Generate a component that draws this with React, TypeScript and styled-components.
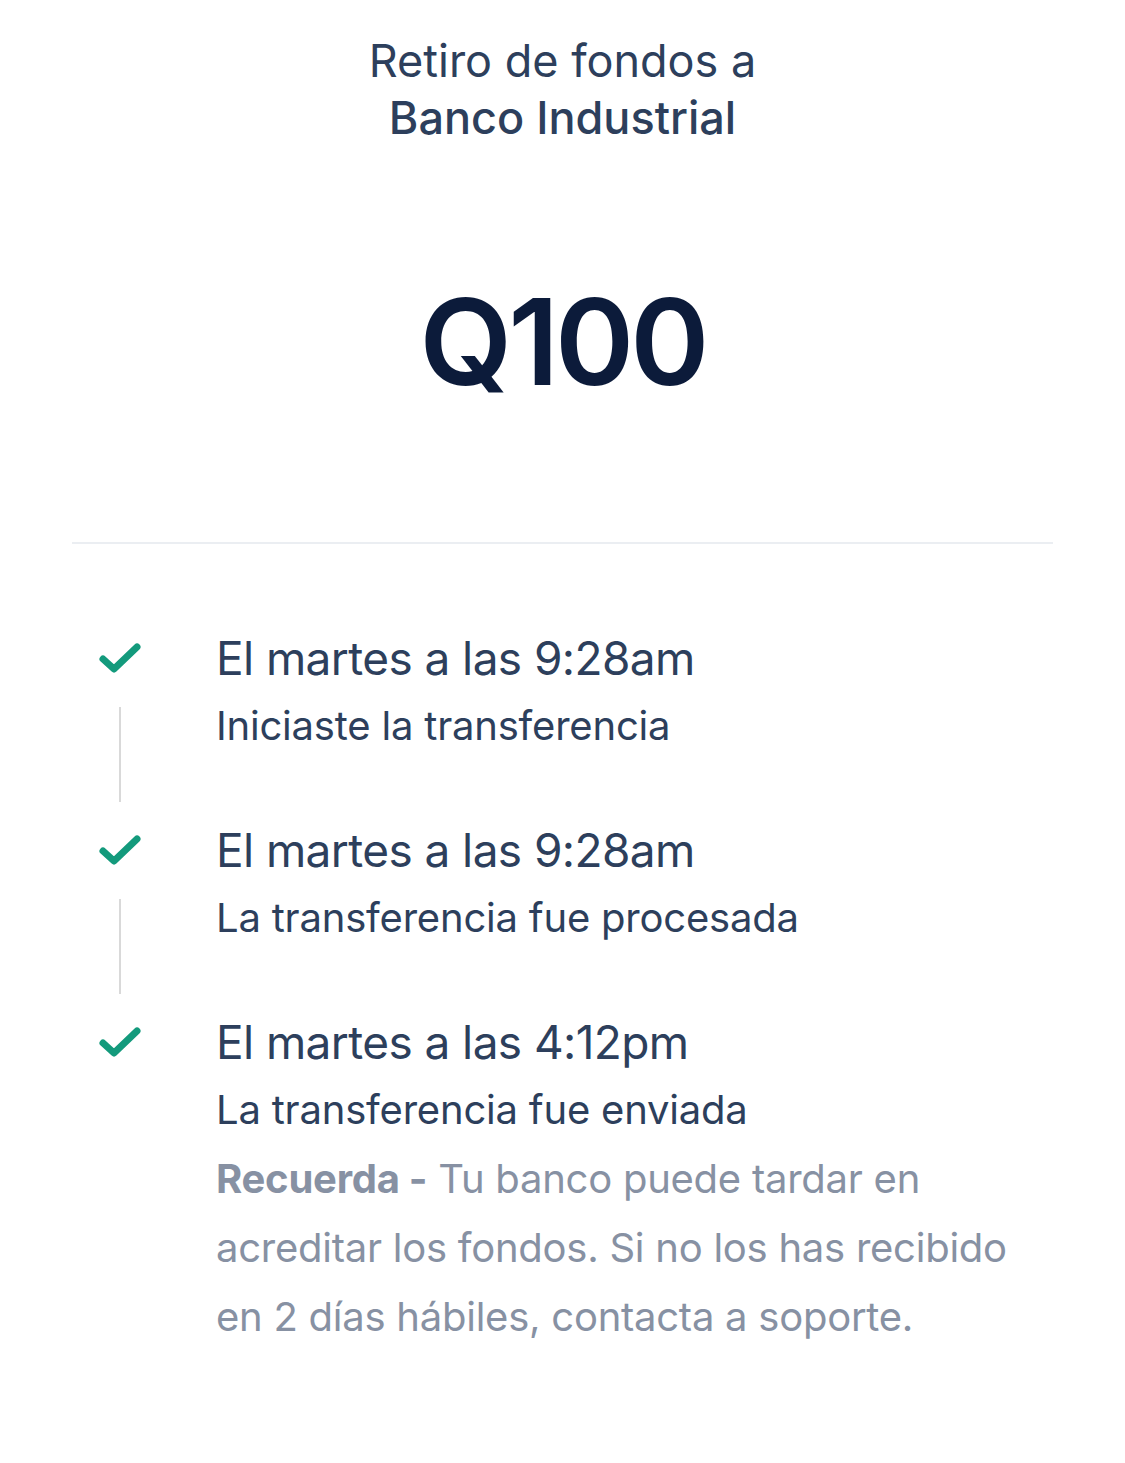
import styled, { createGlobalStyle } from "styled-components";

const GlobalStyle = createGlobalStyle`
  html, body {
    margin: 0;
    padding: 0;
    background: #ffffff;
  }
  body {
    font-family: Inter, "Noto Sans", "Liberation Sans", sans-serif;
    -webkit-font-smoothing: antialiased;
  }
`;

const Page = styled.div`
  width: 1125px;
  min-height: 1463px;
  box-sizing: border-box;
  padding: 32px 72px 0;
  display: flex;
  flex-direction: column;
`;

const Header = styled.div`
  display: flex;
  flex-direction: column;
  align-items: center;
  color: #2d3f5c;
  font-size: 45px;
  line-height: 57px;
`;

const BankName = styled.span`
  font-weight: 500;
`;

const Amount = styled.div`
  margin-top: 136px;
  text-align: center;
  font-size: 120px;
  line-height: 120px;
  font-weight: 600;
  letter-spacing: -4px;
  color: #0c1b3a;
`;

const Divider = styled.hr`
  margin: 140px 0 0;
  border: none;
  height: 2px;
  background: #ebeef2;
`;

const Timeline = styled.div`
  margin-top: 80px;
  display: flex;
  flex-direction: column;
`;

const Step = styled.div`
  display: flex;
  gap: 48px;
`;

const Rail = styled.div`
  width: 96px;
  display: flex;
  flex-direction: column;
  align-items: center;
`;

const CheckBox = styled.div`
  height: 68px;
  display: flex;
  align-items: center;
  justify-content: center;
`;

const RailLine = styled.div`
  flex: 1;
  width: 2px;
  margin: 15px 0 14px;
  background: #d9d9d9;
`;

const Body = styled.div<{ $last?: boolean }>`
  flex: 1;
  display: flex;
  flex-direction: column;
  padding-bottom: ${(p) => (p.$last ? "0" : "56px")};
`;

const When = styled.div`
  font-size: 46px;
  line-height: 68px;
  color: #2d3f5c;
  letter-spacing: -0.6px;
`;

const What = styled.div`
  font-size: 40px;
  line-height: 68px;
  color: #2d3f5c;
  letter-spacing: -0.2px;
`;

const Note = styled.p`
  margin: 0;
  font-size: 40px;
  line-height: 69px;
  color: #8791a3;
  letter-spacing: -0.25px;

  strong {
    font-weight: 700;
  }
`;

const Check = () => (
  <svg width="44" height="36" viewBox="0 0 44 36" fill="none">
    <path
      d="M5 19 L16 29 L39 7"
      stroke="#139a7c"
      strokeWidth="7"
      strokeLinecap="round"
      strokeLinejoin="round"
    />
  </svg>
);

const steps = [
  { when: "El martes a las 9:28am", what: "Iniciaste la transferencia" },
  { when: "El martes a las 9:28am", what: "La transferencia fue procesada" },
  { when: "El martes a las 4:12pm", what: "La transferencia fue enviada" },
];

export default function App() {
  return (
    <>
      <GlobalStyle />
      <Page>
        <Header>
          <span>Retiro de fondos a</span>
          <BankName>Banco Industrial</BankName>
        </Header>
        <Amount>Q100</Amount>
        <Divider />
        <Timeline>
          {steps.map((s, i) => {
            const last = i === steps.length - 1;
            return (
              <Step key={i}>
                <Rail>
                  <CheckBox>
                    <Check />
                  </CheckBox>
                  {!last && <RailLine />}
                </Rail>
                <Body $last={last}>
                  <When>{s.when}</When>
                  <What>{s.what}</What>
                  {last && (
                    <Note>
                      <strong>Recuerda -</strong> Tu banco puede tardar en
                      acreditar los fondos. Si no los has recibido en 2 días
                      hábiles, contacta a soporte.
                    </Note>
                  )}
                </Body>
              </Step>
            );
          })}
        </Timeline>
      </Page>
    </>
  );
}
